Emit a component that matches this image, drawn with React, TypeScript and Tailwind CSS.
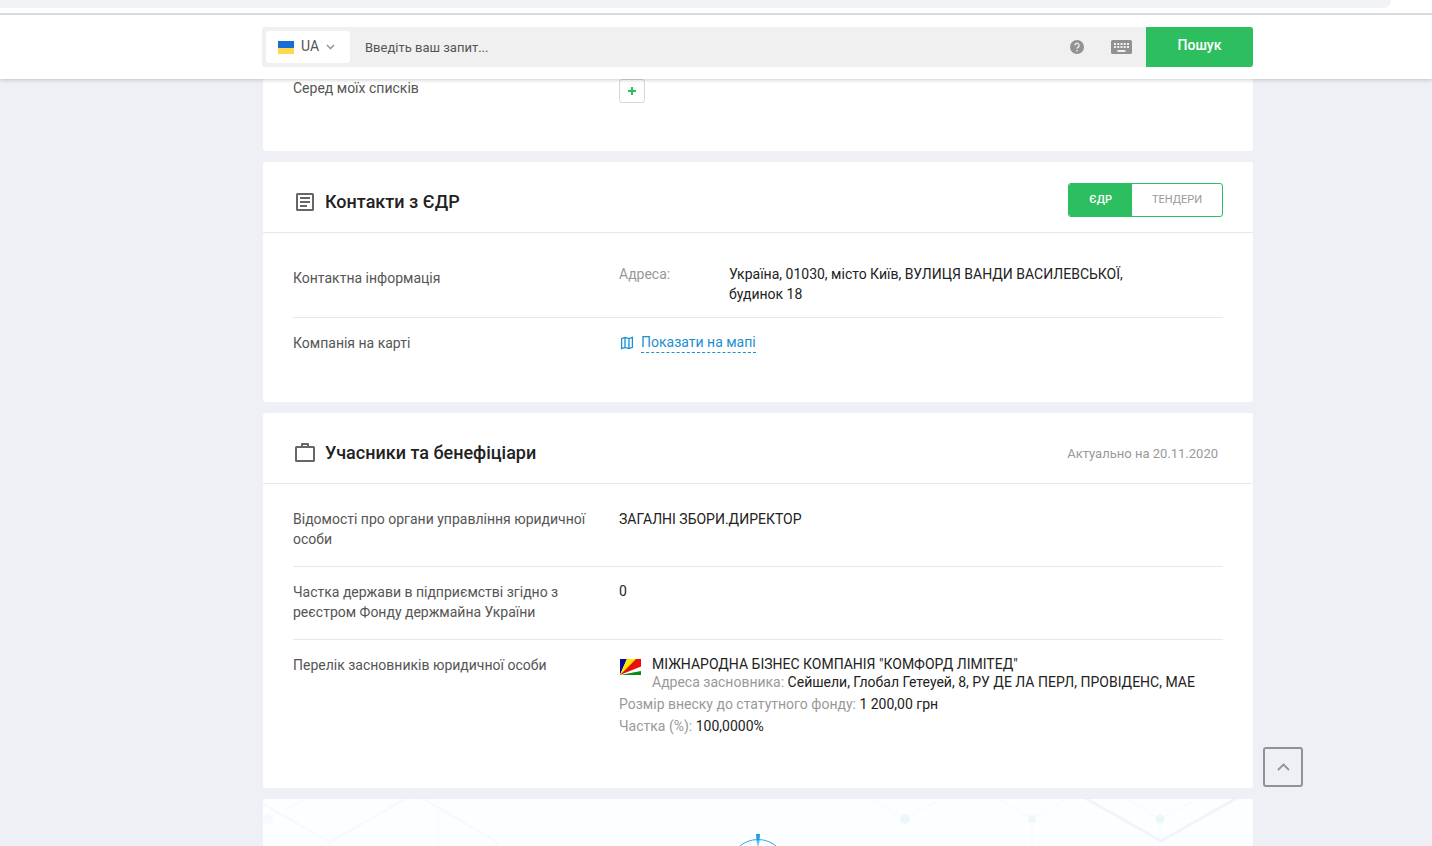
import React, { useState } from 'react';

interface RowProps {
  label: string;
  className?: string;
  labelClassName?: string;
  children: React.ReactNode;
}

const Row: React.FC<RowProps> = ({ label, className = '', labelClassName = '', children }) => (
  <div className={`mx-[30px] flex ${className}`}>
    <div className={`w-[326px] shrink-0 pr-6 text-[#555555] ${labelClassName}`}>{label}</div>
    <div className="min-w-0 flex-1">{children}</div>
  </div>
);

interface CardHeaderProps {
  icon: React.ReactNode;
  title: string;
  children?: React.ReactNode;
}

const CardHeader: React.FC<CardHeaderProps> = ({ icon, title, children }) => (
  <div className="flex items-start border-b border-[#e8e8e8] px-[30px] pt-[21px] pb-[15px]">
    <div className="flex flex-1 items-center pt-[7px] pb-[3px]">
      <span className="w-8 shrink-0 text-[#666666]">{icon}</span>
      <h2 className="text-lg leading-6 font-medium text-[#222222]">{title}</h2>
    </div>
    {children}
  </div>
);

const DocIcon = () => (
  <svg className="size-6" viewBox="0 0 24 24" fill="none" stroke="currentColor" strokeWidth="2" aria-hidden="true">
    <rect x="4" y="4" width="16" height="16" rx="0.5" />
    <path d="M7 8h10M7 12h10M7 16h7" />
  </svg>
);

const CaseIcon = () => (
  <svg className="size-6" viewBox="0 0 24 24" fill="none" stroke="currentColor" strokeWidth="2" aria-hidden="true">
    <rect x="3" y="6" width="18" height="14" rx="0.5" />
    <path d="M9 6V3h6v3" strokeLinejoin="round" />
  </svg>
);

const MapIcon = () => (
  <svg className="size-[14px]" viewBox="0 0 14 14" fill="none" stroke="currentColor" strokeWidth="1.3" aria-hidden="true">
    <path d="M1.6 2.6 5 1.4l4 1.2 3.4-1.2v10L9 12.6l-4-1.2-3.4 1.2zM5 1.4v10M9 2.6v10" />
  </svg>
);

const HelpIcon = () => (
  <svg className="size-[14px]" viewBox="0 0 14 14" aria-hidden="true">
    <circle cx="7" cy="7" r="7" fill="#929296" />
    <path d="M4.9 5.4a2.1 2.1 0 1 1 3.3 1.7C7.4 7.7 7 8 7 8.8" fill="none" stroke="#f0f0f0" strokeWidth="1.3" />
    <rect x="6.3" y="10" width="1.4" height="1.4" fill="#f0f0f0" />
  </svg>
);

const KeyboardIcon = () => (
  <svg className="h-[14px] w-[21px]" viewBox="0 0 21 14" aria-hidden="true">
    <rect width="21" height="14" rx="1.5" fill="#929296" />
    <path d="M3 4h15M3 7h15" stroke="#f0f0f0" strokeWidth="2" strokeDasharray="2 1.25" />
    <path d="M6.5 11h8" stroke="#f0f0f0" strokeWidth="2" />
  </svg>
);

const SeychellesFlag = () => (
  <svg className="h-4 w-[21px]" viewBox="0 0 21 16" role="img" aria-label="Сейшели">
    <rect width="21" height="16" fill="#ffffff" />
    <path d="M0 16V0h7z" fill="#0a0a96" />
    <path d="M0 16 7 0h7z" fill="#fbe900" />
    <path d="M0 16 14 0h7v5.3z" fill="#e8120c" />
    <path d="M0 16 21 10.7V16z" fill="#0a8a1a" />
    <path d="M0 16 21 5.3V12z" fill="#ffffff" />
    <path d="M0 16 16 0h5v7.5z" fill="#e8120c" />
    <path d="M0 16 7 0h9z" fill="#fbe900" />
  </svg>
);

const Pattern = () => (
  <svg className="block h-[47px] w-[990px]" viewBox="0 0 990 47" fill="none" aria-hidden="true">
    <defs>
      <linearGradient id="needle" x1="0" y1="35" x2="0" y2="47" gradientUnits="userSpaceOnUse">
        <stop offset="0.4" stopColor="#159fe6" />
        <stop offset="1" stopColor="#159fe6" stopOpacity="0.3" />
      </linearGradient>
    </defs>
    <g stroke="#f7f9fd" strokeWidth="2.5">
      <path d="M0 5 67 43 146-2M157-2l77 45M67 43v6M234 43v6" />
      <path d="M22 11 42 0M175 0v47" strokeWidth="1" />
    </g>
    <circle cx="5" cy="20" r="5" fill="#f6f9fe" />
    <g stroke="#f4fafd">
      <path d="M609 0l33 20L678 0M735 0l34 20L804 0M864 0l33 20L934 0M769 20v27M897 20v22" />
    </g>
    <path d="M822-1 898 42 974-1" stroke="#ecf6fb" strokeWidth="3" />
    <g fill="#edf7fb">
      <circle cx="642" cy="20" r="5" />
      <circle cx="769" cy="20" r="4" />
      <circle cx="897" cy="20" r="4.5" />
    </g>
    <circle cx="495" cy="69" r="28.5" stroke="#2fa9e8" strokeWidth="1" />
    <path d="M493 35h4l-1 12h-2z" fill="url(#needle)" />
  </svg>
);

const SearchHeader: React.FC = () => {
  const [query, setQuery] = useState('');

  return (
    <header className="relative z-10 bg-white pb-3 shadow-[0_1px_4px_rgba(0,0,0,0.2)]">
      <div className="mr-[41px] h-2 rounded-br-2xl bg-[#f1f3f4]"></div>
      <div className="mt-[5px] h-0.5 bg-[#dadbdf]"></div>
      <form
        className="mt-3 ml-[262px] flex h-10 max-w-[991px] overflow-hidden rounded-[3px] bg-[#f0f0f0]"
        onSubmit={(e) => e.preventDefault()}
      >
        <label className="m-1 flex w-[84px] items-center rounded-[3px] bg-white pl-3 text-[#555555]">
          <svg className="h-[13px] w-4 shrink-0" viewBox="0 0 16 13" aria-hidden="true">
            <rect width="16" height="7" fill="#186cd6" />
            <rect y="7" width="16" height="6" fill="#ffd84d" />
          </svg>
          <select aria-label="Мова" className="ml-[7px] w-[25px] appearance-none bg-transparent pb-0.5 text-sm outline-none">
            <option>UA</option>
          </select>
          <svg className="h-[6px] w-[9px]" viewBox="0 0 9 6" fill="none" stroke="#999999" strokeWidth="1.6" aria-hidden="true">
            <path d="M1 1l3.5 3.5L8 1" />
          </svg>
        </label>
        <input
          type="text"
          aria-label="Запит"
          placeholder="Введіть ваш запит..."
          className="min-w-0 flex-1 bg-transparent px-[11px] pt-0.5 text-[13px] outline-none placeholder:text-[#555555]"
          value={query}
          onChange={(e) => setQuery(e.target.value)}
        />
        <button type="button" aria-label="Довідка" className="px-[13px]">
          <HelpIcon />
        </button>
        <button type="button" aria-label="Клавіатура" className="px-[14px]">
          <KeyboardIcon />
        </button>
        <button type="submit" className="w-[107px] bg-[#2dbe60] pb-1 text-sm font-medium text-white">
          Пошук
        </button>
      </form>
    </header>
  );
};

const App: React.FC = () => {
  const [tab, setTab] = useState('edr');

  return (
    <div className="min-h-screen bg-[#eff0f6] font-[Roboto,sans-serif] text-sm leading-5 text-[#222222]">
      <SearchHeader />

      <main className="ml-[263px] max-w-[990px]">
        <section className="rounded-b-[3px] bg-white pb-12">
          <Row label="Серед моїх списків" labelClassName="leading-[18px]">
            <button
              type="button"
              aria-label="Додати до списку"
              className="flex h-6 w-[26px] items-center justify-center rounded-[3px] border border-[#d8d8d8] text-[#2dbe60]"
            >
              <svg className="size-2" viewBox="0 0 8 8" stroke="currentColor" strokeWidth="2" aria-hidden="true">
                <path d="M4 0v8M0 4h8" />
              </svg>
            </button>
          </Row>
        </section>

        <section className="mt-[11px] rounded-[3px] bg-white pb-[47px]">
          <CardHeader icon={<DocIcon />} title="Контакти з ЄДР">
            <div className="flex h-[34px] overflow-hidden rounded-[3px] border border-[#2dbe60] text-[11px]">
              <button
                type="button"
                aria-pressed={tab === 'edr'}
                onClick={() => setTab('edr')}
                className={`px-5 ${tab === 'edr' ? 'bg-[#2dbe60] font-medium text-white' : 'text-[#999999]'}`}
              >
                ЄДР
              </button>
              <button
                type="button"
                aria-pressed={tab === 'tenders'}
                onClick={() => setTab('tenders')}
                className={`px-5 ${tab === 'tenders' ? 'bg-[#2dbe60] font-medium text-white' : 'text-[#999999]'}`}
              >
                ТЕНДЕРИ
              </button>
            </div>
          </CardHeader>
          <Row label="Контактна інформація" className="border-b border-[#e8e8e8] pt-[31px] pb-[13px]" labelClassName="pt-1">
            <dl className="flex">
              <dt className="w-[110px] shrink-0 text-[#999999]">Адреса:</dt>
              <dd className="max-w-[400px]">Україна, 01030, місто Київ, ВУЛИЦЯ ВАНДИ ВАСИЛЕВСЬКОЇ, будинок 18</dd>
            </dl>
          </Row>
          <Row label="Компанія на карті" className="pt-[14px]" labelClassName="pt-px">
            <a href="#map" className="ml-px inline-flex items-center gap-[7px] text-[#1b8fd2]">
              <MapIcon />
              <span className="border-b border-dashed border-[#1b8fd2]">Показати на мапі</span>
            </a>
          </Row>
        </section>

        <section className="mt-[11px] rounded-[3px] bg-white pb-[52px]">
          <CardHeader icon={<CaseIcon />} title="Учасники та бенефіціари">
            <span className="pt-[10px] pr-[5px] pb-1 text-[13px] text-[#999999]">Актуально на 20.11.2020</span>
          </CardHeader>
          <Row
            label="Відомості про органи управління юридичної особи"
            className="border-b border-[#e8e8e8] pt-[25px] pb-[17px]"
          >
            ЗАГАЛНІ ЗБОРИ.ДИРЕКТОР
          </Row>
          <Row
            label="Частка держави в підприємстві згідно з реєстром Фонду держмайна України"
            className="border-b border-[#e8e8e8] pt-[14px] pb-[17px]"
            labelClassName="pt-px"
          >
            0
          </Row>
          <Row label="Перелік засновників юридичної особи" className="pt-[14px]" labelClassName="pt-px">
            <div className="flex gap-[11px] leading-[18px]">
              <span className="mt-[5px] ml-px shrink-0">
                <SeychellesFlag />
              </span>
              <div className="pt-px">
                <p>МІЖНАРОДНА БІЗНЕС КОМПАНІЯ "КОМФОРД ЛІМІТЕД"</p>
                <p>
                  <span className="text-[#999999]">Адреса засновника:</span> Сейшели, Глобал Гетеуей, 8, РУ ДЕ ЛА ПЕРЛ, ПРОВІДЕНС, МАЕ
                </p>
              </div>
            </div>
            <p className="mt-[3px]">
              <span className="text-[#999999]">Розмір внеску до статутного фонду:</span> 1 200,00 грн
            </p>
            <p className="mt-0.5">
              <span className="text-[#999999]">Частка (%):</span> 100,0000%
            </p>
          </Row>
        </section>

        <section className="mt-[11px] overflow-hidden bg-[#fdfeff]">
          <Pattern />
        </section>
      </main>

      <button
        type="button"
        aria-label="Вгору"
        className="fixed bottom-[59px] left-[1263px] flex size-10 items-center justify-center rounded-[3px] border-2 border-[#929296] text-[#929296]"
      >
        <svg className="h-2 w-[13px]" viewBox="0 0 13 8" fill="none" stroke="currentColor" strokeWidth="1.8" aria-hidden="true">
          <path d="M1 7l5.5-5.5L12 7" />
        </svg>
      </button>
    </div>
  );
};

export default App;
